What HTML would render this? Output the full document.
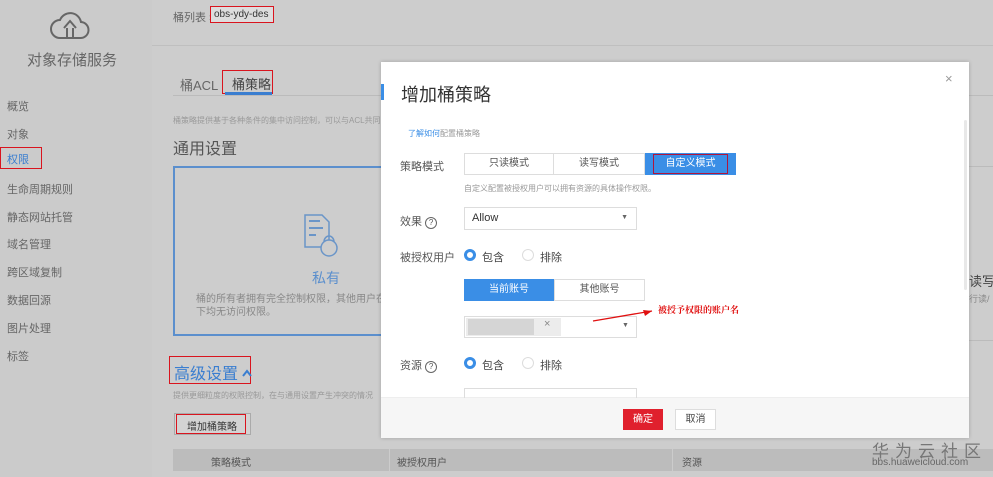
<!DOCTYPE html>
<html><head><meta charset="utf-8"><style>
*{margin:0;padding:0;box-sizing:border-box}
body{width:993px;height:477px;overflow:hidden;background:#cdcdcd;font-family:"Liberation Sans","Noto Sans CJK SC",sans-serif;color:#555;position:relative;font-size:12px}
.a{position:absolute;white-space:nowrap}
.red{border:1.5px solid #d9141e}
.side{left:0;top:0;width:152px;height:477px;background:#cbcbcb}
.nav{left:7px;font-size:11px;color:#666}
.m{background:#fff}
.lbl{font-size:11px;color:#555}
.radio{width:12px;height:12px;border-radius:50%;border:1px solid #ddd;background:#fff}
.radio.on{border:3.5px solid #3a8ee6}
</style></head><body>
<div class="a side"></div>
<svg class="a" style="left:50px;top:10px" width="40" height="30" viewBox="0 0 40 30"><path d="M10 28 H30 A8 8 0 0 0 31 12 A11 11 0 0 0 10 10 A9 9 0 0 0 10 28Z" fill="none" stroke="#666" stroke-width="2"/><path d="M14 18 L20 11 L26 18 M17 18 V28 M23 18 V28" fill="none" stroke="#666" stroke-width="2"/></svg>
<div class="a" style="left:27px;top:49px;font-size:15px;color:#666">对象存储服务</div>
<div class="a nav" style="top:98px">概览</div>
<div class="a nav" style="top:126px">对象</div>
<div class="a nav red" style="left:0;top:147px;width:42px;height:22px;padding:3px 6px;color:#3a7ed0">权限</div>
<div class="a nav" style="top:181px">生命周期规则</div>
<div class="a nav" style="top:209px">静态网站托管</div>
<div class="a nav" style="top:236px">域名管理</div>
<div class="a nav" style="top:264px">跨区域复制</div>
<div class="a nav" style="top:292px">数据回源</div>
<div class="a nav" style="top:320px">图片处理</div>
<div class="a nav" style="top:348px">标签</div>

<div class="a" style="left:152px;top:45px;width:841px;height:1px;background:#bfbfbf"></div>
<div class="a" style="left:173px;top:9px;font-size:11px;color:#666">桶列表 ›</div>
<div class="a red" style="left:210px;top:6px;width:64px;height:17px;background:#ddd;font-size:10px;color:#333;padding:2px 3px;overflow:hidden">obs-ydy-des</div>
<div class="a" style="left:180px;top:75px;font-size:13px;color:#666">桶ACL</div>
<div class="a red" style="left:222px;top:70px;width:51px;height:24px;font-size:13px;color:#444;padding:3px 9px">桶策略</div>
<div class="a" style="left:225px;top:92px;width:47px;height:3px;background:#3a7ed0"></div>
<div class="a" style="left:173px;top:95px;width:210px;height:1px;background:#bbb"></div>
<div class="a" style="left:173px;top:115px;font-size:8px;color:#999">桶策略提供基于各种条件的集中访问控制，可以与ACL共同</div>
<div class="a" style="left:173px;top:135px;font-size:16px;color:#555">通用设置</div>
<div class="a" style="left:173px;top:166px;width:215px;height:170px;border:2px solid #5b8fcd;border-right:none"></div>
<svg class="a" style="left:302px;top:212px" width="50" height="50" viewBox="0 0 50 50"><path d="M3 3 H20 L27 10 V35 H3Z" fill="none" stroke="#6a95c8" stroke-width="1.5"/><path d="M7 9H18M7 16H21M7 23H14" stroke="#6a95c8" stroke-width="2"/><circle cx="27" cy="36" r="8" fill="#cdcdcd" stroke="#6a95c8" stroke-width="1.5"/><path d="M22 30 A5 6 0 0 1 32 30" fill="none" stroke="#6a95c8" stroke-width="1.5"/></svg>
<div class="a" style="left:312px;top:268px;font-size:14px;color:#5b8fcd">私有</div>
<div class="a" style="left:196px;top:293px;font-size:10px;color:#888;line-height:13px">桶的所有者拥有完全控制权限，其他用户在<br>下均无访问权限。</div>
<div class="a red" style="left:169px;top:356px;width:82px;height:28px;font-size:16px;color:#3a7ed0;padding:3px 4px">高级设置 <svg width="10" height="8" viewBox="0 0 10 8" style="vertical-align:2px"><path d="M1 7 L5 2 L9 7" fill="none" stroke="#3a7ed0" stroke-width="2"/></svg></div>
<div class="a" style="left:173px;top:390px;font-size:8px;color:#999">提供更细粒度的权限控制，在与通用设置产生冲突的情况</div>
<div class="a" style="left:174px;top:413px;width:77px;height:22px;border:1px solid #aaa;background:#d3d3d3"></div>
<div class="a red" style="left:176px;top:414px;width:70px;height:20px;font-size:10px;color:#333;padding:3px 10px">增加桶策略</div>
<div class="a" style="left:173px;top:449px;width:820px;height:22px;background:#bcbcbc"></div>
<div class="a" style="left:211px;top:454px;font-size:10px;color:#555">策略模式</div>
<div class="a" style="left:389px;top:449px;width:1px;height:22px;background:#ccc"></div>
<div class="a" style="left:672px;top:449px;width:1px;height:22px;background:#ccc"></div>
<div class="a" style="left:397px;top:454px;font-size:10px;color:#555">被授权用户</div>
<div class="a" style="left:682px;top:454px;font-size:10px;color:#555">资源</div>
<div class="a" style="left:969px;top:95px;width:24px;height:1px;background:#bbb"></div>
<div class="a" style="left:969px;top:166px;width:24px;height:1px;background:#bbb"></div>
<div class="a" style="left:969px;top:271px;font-size:13px;color:#444">读写</div>
<div class="a" style="left:969px;top:292px;font-size:9px;color:#888">行读/</div>
<div class="a" style="left:969px;top:340px;width:24px;height:1px;background:#bbb"></div>

<div class="a m" style="left:381px;top:62px;width:588px;height:376px;box-shadow:0 0 4px rgba(0,0,0,.2)"></div>
<div class="a" style="left:381px;top:397px;width:588px;height:41px;background:#f6f6f6;border-top:1px solid #eee"></div>
<div class="a" style="left:381px;top:84px;width:3px;height:16px;background:#3a8ee6"></div>
<div class="a" style="left:401px;top:81px;font-size:18px;color:#333">增加桶策略</div>
<div class="a" style="left:945px;top:71px;font-size:13px;color:#999">×</div>
<div class="a" style="left:964px;top:120px;width:3px;height:170px;background:#e8e8e8;border-radius:2px"></div>
<div class="a" style="left:408px;top:128px;font-size:8px;color:#999"><span style="color:#3a8ee6">了解如何</span>配置桶策略</div>
<div class="a lbl" style="left:400px;top:158px">策略模式</div>
<div class="a" style="left:464px;top:153px;width:90px;height:22px;border:1px solid #ddd;text-align:center;line-height:20px;font-size:10px;color:#555">只读模式</div>
<div class="a" style="left:553px;top:153px;width:92px;height:22px;border:1px solid #ddd;text-align:center;line-height:20px;font-size:10px;color:#555">读写模式</div>
<div class="a" style="left:645px;top:153px;width:91px;height:22px;background:#3a8ee6"></div>
<div class="a" style="left:653px;top:154px;width:75px;height:20px;border:1.5px solid #b0153d;text-align:center;line-height:17px;font-size:10px;color:#fff">自定义模式</div>
<div class="a" style="left:464px;top:183px;font-size:8px;color:#999">自定义配置被授权用户可以拥有资源的具体操作权限。</div>
<div class="a lbl" style="left:400px;top:213px">效果 <span style="display:inline-block;width:12px;height:12px;border:1px solid #666;border-radius:50%;font-size:8px;text-align:center;line-height:10px">?</span></div>
<div class="a" style="left:464px;top:207px;width:173px;height:23px;border:1px solid #ddd;font-size:11px;color:#333;padding:4px 7px">Allow<span style="position:absolute;right:8px;top:6px;font-size:7px;color:#666">▼</span></div>
<div class="a lbl" style="left:400px;top:249px">被授权用户</div>
<div class="a radio on" style="left:464px;top:249px"></div>
<div class="a lbl" style="left:482px;top:249px;color:#444">包含</div>
<div class="a radio" style="left:522px;top:249px"></div>
<div class="a lbl" style="left:540px;top:249px;color:#444">排除</div>
<div class="a" style="left:464px;top:279px;width:90px;height:22px;background:#3a8ee6;color:#fff;text-align:center;line-height:22px;font-size:10px">当前账号</div>
<div class="a" style="left:554px;top:279px;width:91px;height:22px;border:1px solid #ddd;text-align:center;line-height:20px;font-size:10px;color:#555">其他账号</div>
<div class="a" style="left:464px;top:316px;width:173px;height:22px;border:1px solid #ddd"></div>
<div class="a" style="left:466px;top:318px;width:95px;height:18px;background:#ececec"></div>
<div class="a" style="left:468px;top:319px;width:66px;height:16px;background:#d5d5d5"></div>
<div class="a" style="left:544px;top:318px;font-size:11px;color:#888">×</div>
<div class="a" style="left:622px;top:322px;font-size:7px;color:#666">▼</div>
<svg class="a" style="left:590px;top:305px" width="70" height="20"><path d="M3 16 L62 6" stroke="#e01010" stroke-width="1.3"/><path d="M62 6 L53 5 L55 11Z" fill="#e01010"/></svg>
<div class="a" style="left:658px;top:303px;font-size:9px;font-weight:bold;color:#e01010;font-family:'Liberation Serif','Noto Serif CJK SC',serif">被授予权限的账户名</div>
<div class="a lbl" style="left:400px;top:357px">资源 <span style="display:inline-block;width:12px;height:12px;border:1px solid #666;border-radius:50%;font-size:8px;text-align:center;line-height:10px">?</span></div>
<div class="a radio on" style="left:464px;top:357px"></div>
<div class="a lbl" style="left:482px;top:357px;color:#444">包含</div>
<div class="a radio" style="left:522px;top:357px"></div>
<div class="a lbl" style="left:540px;top:357px;color:#444">排除</div>
<div class="a" style="left:464px;top:388px;width:173px;height:10px;border:1px solid #ddd;border-bottom:none"></div>
<div class="a" style="left:623px;top:409px;width:40px;height:21px;background:#e0202d;color:#fff;text-align:center;line-height:21px;font-size:10px">确定</div>
<div class="a" style="left:675px;top:409px;width:41px;height:21px;background:#fff;border:1px solid #ddd;text-align:center;line-height:19px;font-size:10px;color:#444">取消</div>
<div class="a" style="left:872px;top:437px;font-size:17px;color:#777;letter-spacing:6px">华为云社区</div>
<div class="a" style="left:872px;top:457px;font-size:10px;color:#666">bbs.huaweicloud.com</div>
</body></html>
